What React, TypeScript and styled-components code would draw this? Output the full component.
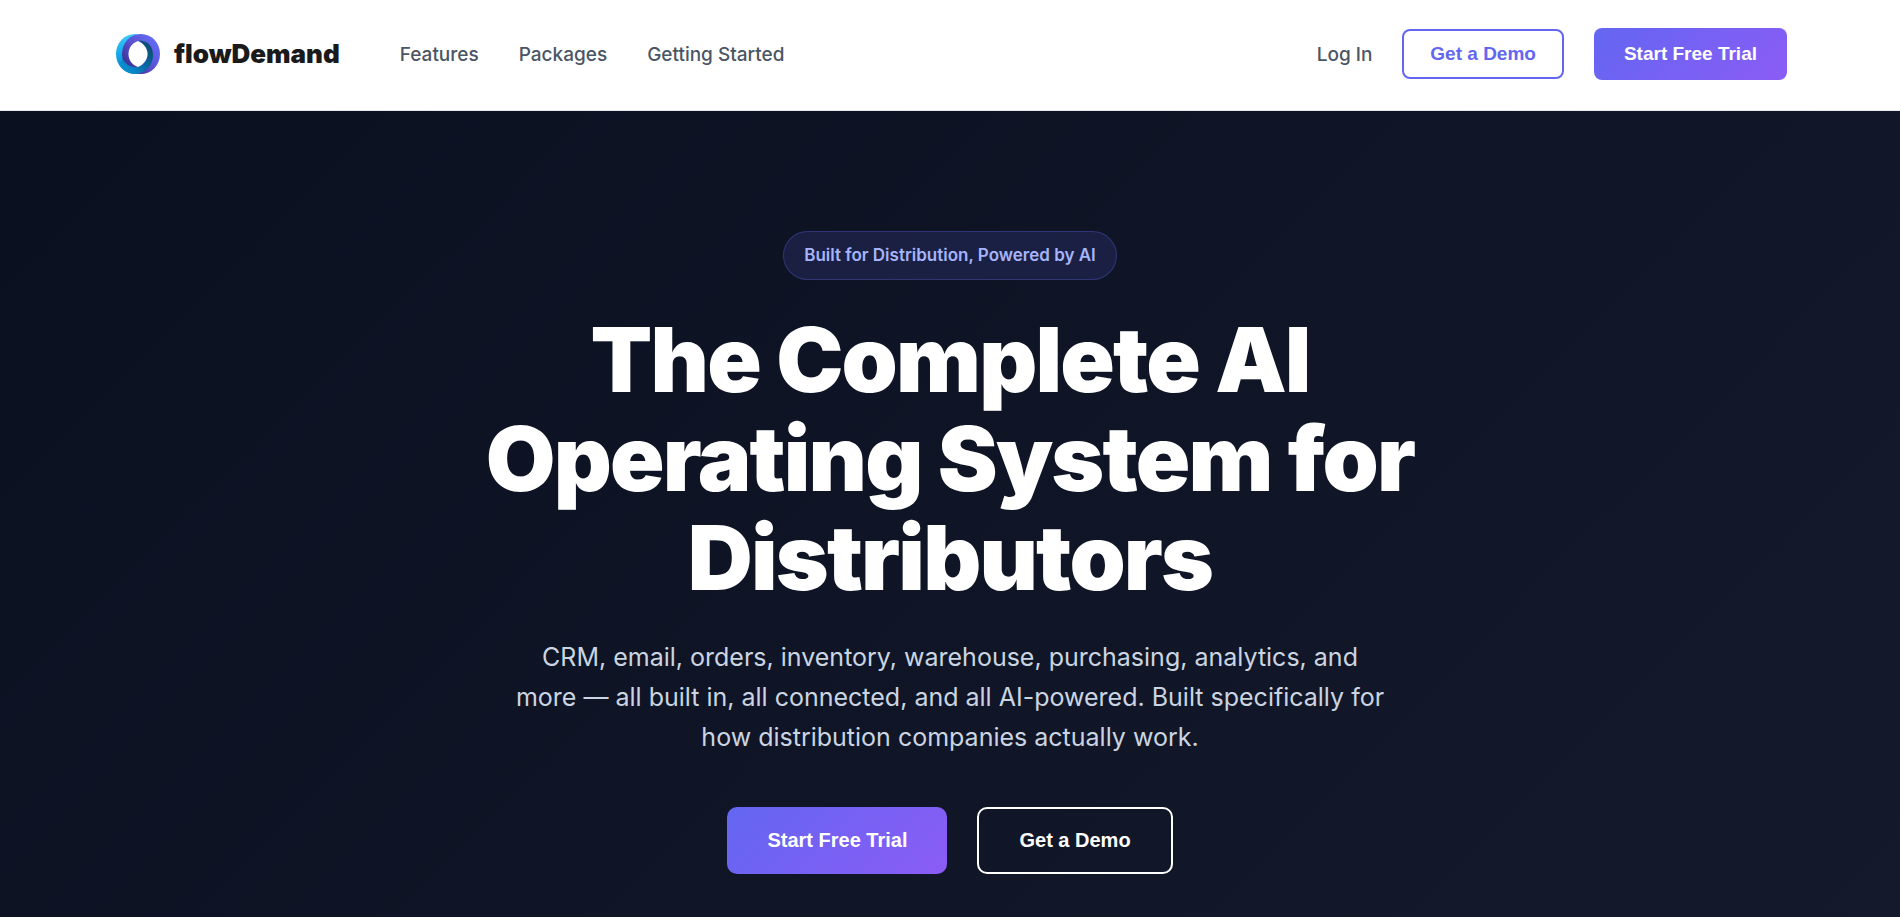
import React from "react";
import styled, { createGlobalStyle, css } from "styled-components";

const GlobalStyle = createGlobalStyle`
  *, *::before, *::after { box-sizing: border-box; }
  body {
    margin: 0;
    font-family: Inter, "Liberation Sans", sans-serif;
    color: #1a1a1a;
    background: #fff;
  }
`;

const Page = styled.div`
  min-height: 100vh;
  display: flex;
  flex-direction: column;
`;

const Header = styled.header`
  background: #fff;
  border-bottom: 1px solid #e5e7eb;
`;

const HeaderInner = styled.div`
  max-width: 1750px;
  margin: 0 auto;
  padding: 28px 38px 30px;
  display: flex;
  align-items: center;
  justify-content: space-between;
`;

const HeaderGroup = styled.div<{ $gap: number }>`
  display: flex;
  align-items: center;
  gap: ${({ $gap }) => $gap}px;
`;

const Brand = styled.a`
  display: flex;
  align-items: center;
  gap: 11px;
  color: #1a1a1a;
  font-size: 26px;
  font-weight: 900;
  line-height: 40px;
  text-decoration: none;
`;

const Nav = styled.nav`
  display: flex;
  gap: 40px;
`;

const NavLink = styled.a`
  padding-top: 1px;
  color: #4b5563;
  font-size: 19px;
  font-weight: 500;
  line-height: 30px;
  text-decoration: none;
`;

const primary = css`
  border: 0;
  color: #fff;
  background: linear-gradient(135deg, #6366f1 0%, #8b5cf6 100%);
`;

const outline = css<{ $tone?: string }>`
  border: 2px solid ${({ $tone }) => $tone};
  color: ${({ $tone }) => $tone};
  background: transparent;
`;

const Button = styled.button<{ $tone?: string }>`
  font-family: "Liberation Sans", Arial, sans-serif;
  font-size: 19px;
  font-weight: 600;
  line-height: 22px;
  border-radius: 8px;
  cursor: pointer;
  ${({ $tone }) => ($tone ? outline : primary)}
  padding: ${({ $tone }) => ($tone ? "12px 26px" : "15px 30px")};
`;

const HeroButton = styled(Button)`
  font-size: 20px;
  line-height: 23px;
  border-radius: 10px;
  padding: ${({ $tone }) => ($tone ? "20px 40px" : "22px 40px")};
`;

const Hero = styled.main`
  flex: 1;
  padding: 120px 38px 40px;
  display: flex;
  flex-direction: column;
  align-items: center;
  text-align: center;
  background: linear-gradient(135deg, #0a1020 0%, #141a2b 100%);
`;

const Badge = styled.div`
  padding: 10px 20px;
  border: 1px solid rgba(99, 102, 241, 0.3);
  border-radius: 25px;
  background: rgba(99, 102, 241, 0.15);
  color: #a5b4fc;
  font-size: 17px;
  font-weight: 600;
  line-height: 27px;
`;

const Title = styled.h1`
  max-width: 1000px;
  margin: 30px 0;
  color: #fff;
  font-size: 90px;
  font-weight: 900;
  line-height: 99px;
  letter-spacing: -0.02em;
`;

const Lead = styled.p`
  max-width: 875px;
  margin: 0 0 50px;
  color: #cbd5e1;
  font-size: 25px;
  line-height: 40px;
`;

const Actions = styled.div`
  display: flex;
  flex-wrap: wrap;
  justify-content: center;
  gap: 30px;
`;

const LogoMark = () => (
  <svg width="50" height="50" viewBox="0 0 50 50" aria-hidden="true">
    <defs>
      <linearGradient id="sky" gradientUnits="userSpaceOnUse" x1="20" y1="5" x2="22" y2="45">
        <stop offset="0" stopColor="#3ccafc" />
        <stop offset="0.5" stopColor="#14a8ec" />
        <stop offset="1" stopColor="#0679b8" />
      </linearGradient>
      <linearGradient id="violet" gradientUnits="userSpaceOnUse" x1="42" y1="14" x2="14" y2="38">
        <stop offset="0" stopColor="#6468f2" />
        <stop offset="0.5" stopColor="#5950d0" />
        <stop offset="1" stopColor="#3a3192" />
      </linearGradient>
      <linearGradient id="teal" gradientUnits="userSpaceOnUse" x1="36" y1="13" x2="10" y2="38">
        <stop offset="0" stopColor="#0b4a6c" />
        <stop offset="0.5" stopColor="#0768a0" />
        <stop offset="1" stopColor="#0a8fd2" />
      </linearGradient>
    </defs>
    <ellipse cx="22" cy="25" rx="19" ry="20" fill="url(#sky)" />
    <ellipse cx="28" cy="25" rx="19" ry="20" fill="url(#violet)" />
    <path
      d="M25 12C33 11 40 16 40 26C40 36 33 43 24 45C16 45 9 41 6 35L10 30C12 35 18 39 25 38C31 36 34.500 31 34.500 25C34.500 19 30 14 25 12Z"
      fill="url(#teal)"
    />
    <path
      d="M25 12C30 14 34.500 19 34.500 25C34.500 31 30 36 25 38C19 36 15.500 31 15.500 25C15.500 19 19 14 25 12Z"
      fill="#fff"
    />
  </svg>
);

export default function App() {
  return (
    <Page>
      <GlobalStyle />
      <Header>
        <HeaderInner>
          <HeaderGroup $gap={60}>
            <Brand href="#">
              <LogoMark />
              flowDemand
            </Brand>
            <Nav aria-label="Main">
              <NavLink href="#features">Features</NavLink>
              <NavLink href="#packages">Packages</NavLink>
              <NavLink href="#getting-started">Getting Started</NavLink>
            </Nav>
          </HeaderGroup>
          <HeaderGroup $gap={30}>
            <NavLink href="#login">Log In</NavLink>
            <Button type="button" $tone="#6366f1">Get a Demo</Button>
            <Button type="button">Start Free Trial</Button>
          </HeaderGroup>
        </HeaderInner>
      </Header>
      <Hero>
        <Badge>Built for Distribution, Powered by AI</Badge>
        <Title>The Complete AI Operating System for Distributors</Title>
        <Lead>
          CRM, email, orders, inventory, warehouse, purchasing, analytics, and
          more — all built in, all connected, and all AI-powered. Built
          specifically for how distribution companies actually work.
        </Lead>
        <Actions>
          <HeroButton type="button">Start Free Trial</HeroButton>
          <HeroButton type="button" $tone="#ffffff">Get a Demo</HeroButton>
        </Actions>
      </Hero>
    </Page>
  );
}
